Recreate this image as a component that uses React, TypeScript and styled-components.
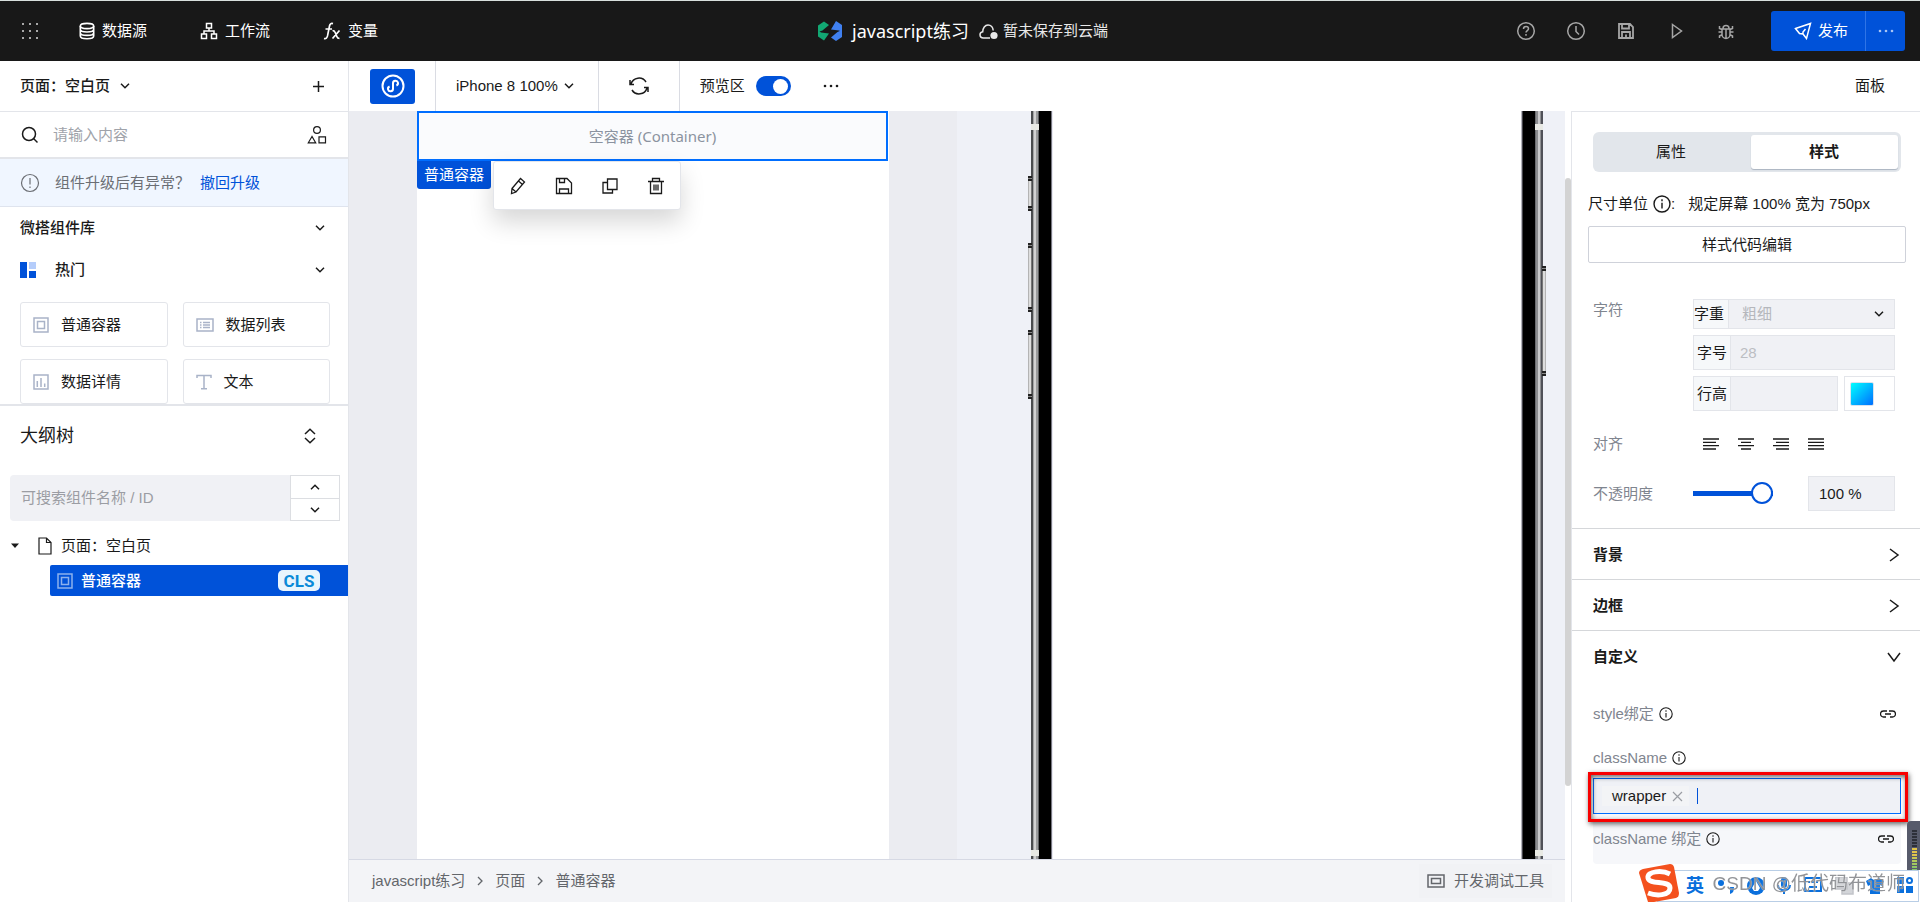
import React from 'react';
import styled, { createGlobalStyle, css } from 'styled-components';

const blue = '#0052d9';
const ink = '#1a1a1a';
const line = '#e3e5ea';
const sans = '"Liberation Sans", "Noto Sans CJK SC", sans-serif';
const humanist = '"Noto Sans", "Noto Sans CJK SC", sans-serif';

const GlobalStyle = createGlobalStyle`
  * { box-sizing: border-box; }
  body { margin: 0; background: #fff; color: ${ink}; font: 15px/22px ${sans}; }
  button, input, select { font: inherit; color: inherit; margin: 0; }
  button { padding: 0; border: 0; background: none; cursor: pointer; }
  a { text-decoration: none; color: inherit; }
  h2, h3, p { margin: 0; font-size: inherit; }
`;

/* ---------- icons ---------- */
const Svg = styled.svg<{ $w: number; $h: number }>`
  display: block;
  flex: none;
  width: ${p => p.$w}px;
  height: ${p => p.$h}px;
  fill: none;
  stroke: currentColor;
`;

type IconProps = { w?: number; h?: number; sw?: number; children: React.ReactNode };
const Icon = ({ w = 18, h = w, sw = 1.5, children }: IconProps) => (
  <Svg $w={w} $h={h} viewBox={`0 0 ${w} ${h}`} strokeWidth={sw} aria-hidden="true">{children}</Svg>
);

const Chevron = ({ up = false }: { up?: boolean }) => (
  <Icon w={10} h={8}><path d={up ? 'M1 6.2 5 2.2 9 6.2' : 'M1 1.8 5 5.8 9 1.8'} /></Icon>
);
const DotGrid = () => (
  <Icon w={18}>
    <g fill="#a8a8a8" stroke="none">
      {[2, 9, 16].flatMap(y => [2, 9, 16].map(x => <rect key={`${x}-${y}`} x={x - 1} y={y - 1} width="2" height="2" />))}
    </g>
  </Icon>
);
const Database = () => (
  <Icon w={16} h={18} sw={1.6}>
    <ellipse cx="8" cy="4" rx="6.7" ry="2.6" />
    <path d="M1.3 4v10c0 1.5 3 2.7 6.7 2.7s6.7-1.2 6.7-2.7V4M1.3 7.3c0 1.5 3 2.7 6.7 2.7s6.7-1.2 6.7-2.7M1.3 10.7c0 1.5 3 2.7 6.7 2.7s6.7-1.2 6.7-2.7" />
  </Icon>
);
const Workflow = () => (
  <Icon w={18}><rect x="6.5" y="1.5" width="5" height="4.5" /><rect x="1.5" y="12" width="5" height="4.5" /><rect x="11.5" y="12" width="5" height="4.5" /><path d="M9 6v3M4 12V9h10v3" /></Icon>
);
const Formula = () => (
  <Icon w={18} sw={1.7}><path d="M1 16.5c2 .6 3-.6 3.500-2.600L6.500 4c.4-2 1.500-3 3.500-2.400M2.500 7H9M9.500 8.500c1.500 0 2 .5 2.700 2l1.600 4c.5 1.400 1 2 2.700 2M16.500 8.500 9.500 16.500" /></Icon>
);
const Cloud = () => (
  <Icon w={19} h={17}><path d="M11 15H4.5C2.5 15 1 13.8 1 11.8c0-1.7 1-2.7 2.700-3C3.800 5 6 2 9 2s5 2.500 5.200 5.500" /><circle cx="15" cy="12.5" r="3.6" fill="currentColor" stroke="none" /></Icon>
);
const Logo = () => (
  <Icon w={24} h={20}>
    <g stroke="none">
      <path fill="#12a873" d="M0 4.500 6 .5l5 3.500-6.500 5.500L0 11z" />
      <path fill="#12a873" d="M0 9l3 2.500 8 1-5 7-6-4z" />
      <path fill="#4080f0" d="M18 0l6 4v7l-3-1.500-8-1z" />
      <path fill="#4080f0" d="M24 9v7l-6 4-5-3.500 6.500-5.500z" />
    </g>
  </Icon>
);
const Help = () => (
  <Icon w={20}><circle cx="10" cy="10" r="8.3" /><path d="M7.500 8c0-1.500 1.100-2.400 2.500-2.400s2.500.9 2.500 2.200c0 1.700-2.500 1.900-2.500 3.700M10 13v1.700" /></Icon>
);
const History = () => <Icon w={20}><circle cx="10" cy="10" r="8.3" /><path d="M10 5v5.500l3 3" /></Icon>;
const SaveOutline = () => (
  <Icon w={18} sw={1.8}><path d="M2 2h11l3 3v11H2zM5 2v4.500h7V2M5 16v-6h8v6M9 12.500v3" /></Icon>
);
const PlayIcon = () => <Icon w={18}><path d="M5.500 2.500 14.500 9l-9 6.500z" /></Icon>;
const BugIcon = () => (
  <Icon w={18}><path d="M5 7h8v5.500a4 4 0 0 1-8 0zM6 6.500a3 3 0 0 1 6 0M9 7v9M1.500 10H5M13 10h3.500M2.500 4v2.500L5 7.500M15.500 4v2.500L13 7.500M2.500 16v-2L5 12.800M15.500 16v-2L13 12.800" /></Icon>
);
const Plane = () => <Icon w={18}><path d="M1.500 6.500 16.500 1.500 12.500 16.500 9 12 5.500 11.500zM9 12v-2l2.500-3" /></Icon>;
const Dots = () => (
  <Icon w={18} h={4}><g fill="currentColor" stroke="none"><circle cx="3" cy="2" r="1.3" /><circle cx="9" cy="2" r="1.3" /><circle cx="15" cy="2" r="1.3" /></g></Icon>
);
const Plus = () => <Icon w={13}><path d="M6.500 1v11M1 6.500h11" /></Icon>;
const SearchIcon = () => <Icon w={18}><circle cx="8" cy="8" r="6.5" /><path d="m12.500 12.500 4 4" /></Icon>;
const Shapes = () => <Icon w={20} h={18} sw={1.2}><circle cx="10" cy="4" r="3.4" /><path d="M5 10.500 1.300 16.800h7.400zM12 10.800h6.500v6H12z" /></Icon>;
const Warn = () => <Icon w={20} sw={1.2}><circle cx="10" cy="10" r="8.5" /><path d="M10 5v6.500M10 13.500V15" /></Icon>;
const Hot = () => (
  <Icon w={16}><g stroke="none"><path fill={blue} d="M0 0h7v16H0zM9 9h7v7H9z" /><path fill="#b5cdfb" d="M9 0h7v7H9z" /></g></Icon>
);
const Box = () => <Icon w={16}><path d="M1 1h14v14H1zM4.500 4.500h7v7h-7z" /></Icon>;
const ListIcon = () => <Icon w={18} h={14}><path d="M1 1h16v12H1zM4 4.500h1.500M7 4.500h7M4 7h1.500M7 7h7M4 9.500h1.500M7 9.500h7" /></Icon>;
const ChartIcon = () => <Icon w={16}><path d="M1 1h14v14H1zM4.300 7v6M8 4v9M11.700 9.500V13" /></Icon>;
const TextIcon = () => <Icon w={16}><path d="M1 4V1.500h14V4M8 1.500v13M5 14.800h6" /></Icon>;
const Sorter = () => <Icon w={12} h={16}><path d="M1 6 6 1.200 11 6M1 10 6 14.800 11 10" /></Icon>;
const Caret = () => <Icon w={10} h={6}><path d="M1 .5h8L5 5z" fill="currentColor" stroke="none" /></Icon>;
const FileIcon = () => <Icon w={14} h={18} sw={1.2}><path d="M1 1h7.500L13 5.500V17H1zM8.500 1v4.500H13" /></Icon>;
const MiniProgram = () => (
  <Icon w={24} sw={2}><circle cx="12" cy="12" r="10.5" /><path d="M12 14.800V9.200a2.500 2.500 0 1 1 3.400 2.300M12 9.200v5.600a2.500 2.500 0 1 1-3.400-2.300" /></Icon>
);
const Refresh = () => <Icon w={20}><path d="M2 8A8.300 8.300 0 0 1 17 6M18 12A8.300 8.300 0 0 1 3 14M1 4v4.500h4M19 16v-4.500h-4" /></Icon>;
const Pencil = () => <Icon w={16} h={18} sw={1.3}><path d="M2 11.500 10.500 1.500 14.500 5 6 15 1.500 16.500zM8.500 4l4 3.500M2 11.500 6 15" /></Icon>;
const SaveDisk = () => <Icon w={18} sw={1.3}><path d="M1.500 1.500h10.500l4.500 4.500v10.500h-15zM4.500 1.500v4h5v-4M4.500 16.500V12h9v4.500" /></Icon>;
const Copy = () => <Icon w={16} sw={1.3}><path d="M5.500 1h9.500v10.500H5.500zM5.500 4.500H1V15h9.500v-3.500" /></Icon>;
const Trash = () => <Icon w={18} sw={1.3}><path d="M1 4.500h16M5.500 4.500v-3h7v3M3.500 4.500v12h11v-12M7 7.500v6M9 7.500v6M11 7.500v6" /></Icon>;
const Info = ({ size = 14 }: { size?: number }) => (
  <Svg $w={size} $h={size} viewBox="0 0 14 14" strokeWidth="1.1" aria-hidden="true"><circle cx="7" cy="7" r="6.2" /><path d="M7 6v4.500M7 3.300v1.500" /></Svg>
);
const Link = () => <Icon w={16} h={8} sw={1.3}><path d="M7 1H3.500a3 3 0 0 0 0 6H6M9 1h3.500a3 3 0 0 1 0 6H10M5 4h6" /></Icon>;
const Monitor = () => <Icon w={18} h={14}><path d="M1 1h16v12H1zM4.500 4.500h9v5h-9z" /></Icon>;
const Crumb = () => <Icon w={6} h={10} sw={1.3}><path d="M1 1l4 4-4 4" /></Icon>;
const AngleRight = () => <Icon w={14}><path d="M3 1l8 6-8 6" /></Icon>;
const AngleDown = () => <Icon w={14}><path d="M1 3l6 8 6-8" /></Icon>;
const Align = ({ from, to }: { from: number; to: number }) => (
  <Icon w={16} h={12} sw={1.3}><path d={`M0 1H16M${from} 4.300H${to}M0 7.700H16M${from} 11H${to}`} /></Icon>
);

/* ---------- shell ---------- */
const Page = styled.div`
  display: flex;
  flex-direction: column;
  height: 100vh;
  overflow: hidden;
`;
const TopBar = styled.header`
  display: flex;
  flex: none;
  align-items: center;
  height: 61px;
  padding: 0 15px 0 21px;
  border-top: 1px solid #d8dfdd;
  background: #181818;
  color: #fff;
`;
const TopSide = styled.div<{ $end?: boolean }>`
  display: flex;
  flex: 1;
  align-items: center;
  justify-content: ${p => (p.$end ? 'flex-end' : 'flex-start')};
`;
const TopNav = styled.nav`
  display: flex;
  gap: 53px;
  margin-left: 40px;
`;
const NavItem = styled.a`
  display: flex;
  align-items: center;
  gap: 7px;
`;
const Title = styled.div`
  display: flex;
  align-items: center;
  gap: 10px;
  font: 18px/24px ${humanist};
`;
const CloudState = styled.span`
  display: flex;
  align-items: center;
  gap: 5px;
  color: #e8e8e8;
  font: 15px/22px ${sans};
`;
const ToolList = styled.div`
  display: flex;
  gap: 30px;
  margin-right: 35px;
  color: #a6a6a6;
`;
const ToolButton = styled.button`
  display: grid;
  place-items: center;
  width: 20px;
  height: 20px;
`;
const PublishGroup = styled.div`
  display: flex;
  height: 40px;
  border-radius: 3px;
  background: ${blue};
  overflow: hidden;
`;
const Publish = styled.button`
  display: flex;
  align-items: center;
  justify-content: center;
  gap: 6px;
  width: 94px;
  padding-left: 6px;
`;
const PublishMore = styled.button`
  display: grid;
  place-items: center;
  width: 40px;
  border-left: 1px solid #2f74e6;
  color: #a9c5f5;
`;
const Body = styled.div`
  display: flex;
  flex: 1;
  min-height: 0;
`;

/* ---------- sidebar ---------- */
const Sidebar = styled.aside`
  flex: none;
  width: 349px;
  border-right: 1px solid ${line};
`;
const SideRow = styled.div<{ $h: number; $lined?: boolean }>`
  display: flex;
  align-items: center;
  justify-content: space-between;
  height: ${p => p.$h}px;
  padding: 0 23px 0 20px;
  ${p => p.$lined && css`border-bottom: 1px solid ${line};`}
`;
const Strong = styled.h3`
  font-weight: 500;
`;
const PageSwitch = styled.button`
  display: flex;
  align-items: center;
  gap: 10px;
  font-weight: 500;
`;
const IconButton = styled.button`
  display: grid;
  place-items: center;
`;
const SearchBox = styled.label`
  display: flex;
  align-items: center;
  height: 47px;
  padding: 0 21px;
  border-bottom: 2px solid ${line};
`;
const PlainInput = styled.input`
  flex: 1;
  min-width: 0;
  margin: 0 0 0 14px;
  padding: 0;
  border: 0;
  outline: 0;
  background: transparent;
  &::placeholder { color: #a0a3aa; opacity: 1; }
`;
const Notice = styled.div`
  display: flex;
  align-items: center;
  height: 48px;
  padding: 0 20px;
  border-bottom: 1px solid #dfe4ee;
  background: #f0f6ff;
  color: #6b6e74;
`;
const NoticeText = styled.p`margin-left: 15px;`;
const NoticeLink = styled.a`
  margin-left: 10px;
  color: ${blue};
`;
const GroupTitle = styled(Strong)`
  margin-left: 19px;
  flex: 1;
`;
const CardGrid = styled.div`
  display: grid;
  grid-template-columns: 1fr 1fr;
  gap: 12px 15px;
  padding: 11px 18px 0 20px;
  border-bottom: 2px solid ${line};
`;
const Card = styled.button`
  display: flex;
  align-items: center;
  gap: 12px;
  height: 45px;
  padding-left: 12px;
  border: 1px solid ${line};
  border-radius: 3px;
  svg { color: #a9b3c8; }
`;
const OutlineHead = styled.div`
  display: flex;
  align-items: center;
  justify-content: space-between;
  height: 60px;
  padding: 0 32px 0 20px;
`;
const OutlineTitle = styled.h2`
  font-size: 18px;
  font-weight: 400;
`;
const OutlineSearch = styled.div`
  display: flex;
  height: 46px;
  margin: 9px 8px 0 10px;
`;
const OutlineInput = styled.input`
  flex: 1;
  min-width: 0;
  padding: 0 11px;
  border: 0;
  border-radius: 4px 0 0 4px;
  background: #f0f1f5;
  &::placeholder { color: #9b9da3; opacity: 1; }
`;
const Stepper = styled.div`
  display: grid;
  grid-template-rows: 1fr 1fr;
  width: 50px;
  border: 1px solid #dcdee2;
  button + button { border-top: 1px solid #dcdee2; }
`;
const TreeRow = styled.div`
  display: flex;
  align-items: center;
  height: 30px;
  margin-top: 10px;
  padding-left: 10px;
`;
const TreeIcon = styled.span`margin: 0 9px 0 18px;`;
const TreeLeaf = styled.button`
  display: flex;
  align-items: center;
  gap: 8px;
  width: calc(100% - 50px);
  height: 31px;
  margin: 4px 0 0 50px;
  padding: 0 28px 0 7px;
  border-radius: 2px 0 0 2px;
  background: ${blue};
  color: #fff;
  font-weight: 500;
  svg { opacity: 0.55; }
`;
const Cls = styled.span`
  margin-left: auto;
  width: 42px;
  height: 21px;
  border-radius: 5px;
  background: #e9f5fd;
  color: #0a8ad8;
  font: 700 17px/22px Roboto, sans-serif;
  text-align: center;
`;

/* ---------- work area ---------- */
const Work = styled.div`
  display: flex;
  flex: 1;
  flex-direction: column;
  min-width: 0;
`;
const Toolbar = styled.div`
  display: flex;
  flex: none;
  height: 50px;
`;
const ToolCell = styled.div<{ $pad: string }>`
  display: flex;
  align-items: center;
  padding: ${p => p.$pad};
  border-right: 1px solid #dadce3;
  &:nth-last-child(-n + 2) { border-right: 0; }
`;
const Mode = styled.button`
  display: grid;
  place-items: center;
  width: 45px;
  height: 35px;
  border-radius: 3px;
  background: ${blue};
  color: #fff;
`;
const Device = styled.button`
  display: flex;
  align-items: center;
  gap: 6px;
`;
const SwitchLabel = styled.label`
  display: flex;
  align-items: center;
  gap: 11px;
  margin-right: 31px;
`;
const Switch = styled.input`
  appearance: none;
  display: flex;
  align-items: center;
  justify-content: flex-end;
  width: 35px;
  height: 20px;
  padding: 0 3px;
  border-radius: 10px;
  background: ${blue};
  &::before {
    content: '';
    width: 15px;
    height: 15px;
    border-radius: 50%;
    background: #fff;
  }
`;
const PanelToggle = styled.button`
  margin-left: auto;
  padding: 0 35px;
`;
const Split = styled.div`
  display: flex;
  flex: 1;
  min-height: 0;
`;
const Stage = styled.main`
  display: flex;
  flex: 1;
  flex-direction: column;
  min-width: 0;
`;
const StageRow = styled.div`
  display: grid;
  grid-template-columns: 1fr 1fr;
  flex: 1;
  min-height: 0;
`;
const Design = styled.section`
  display: flex;
  justify-content: center;
  background: #ebecf1;
`;
const Sheet = styled.div`
  width: 472px;
  background: #fff;
`;
const Selected = styled.div`
  position: relative;
  display: grid;
  place-items: center;
  height: 50px;
  margin-right: 1px;
  border: 2px solid #006eff;
  background: #fafbfd;
  color: #8b93a0;
  font-family: ${humanist};
`;
const FloatRow = styled.div`
  position: absolute;
  top: 48px;
  left: -2px;
  display: flex;
  align-items: flex-start;
  gap: 2px;
`;
const NameTag = styled.span`
  height: 28px;
  padding: 0 7px;
  border-radius: 0 0 3px 3px;
  background: ${blue};
  color: #fff;
  font: 15px/27px ${sans};
`;
const Actions = styled.div`
  display: flex;
  justify-content: space-between;
  width: 188px;
  height: 49px;
  padding: 0 14px;
  border: 1px solid ${line};
  border-radius: 3px;
  background: #fff;
  box-shadow: 0 12px 24px rgba(0, 0, 0, 0.16);
  color: ${ink};
`;
const ActionButton = styled(IconButton)`width: 20px;`;
const Preview = styled.section`
  display: flex;
  justify-content: flex-end;
  padding-right: 22px;
  background: #eff1f7;
`;
const Phone = styled.div`
  display: flex;
  width: 512px;
  background: #fff;
`;
const bezel = css`
  position: relative;
  width: 22px;
`;
const bands = 'linear-gradient(#e8e9e4, #e8e9e4)';
const BezelLeft = styled.div`
  ${bezel}
  background:
    ${bands} 0 13px / 8px 6px no-repeat,
    ${bands} 0 calc(100% - 3px) / 8px 6px no-repeat,
    linear-gradient(90deg, #4a4c4e 0 2px, #a3a4a5 2px 3px, #d2d2d2 3px 5px, #9a9b9c 5px 7px, #5c5e60 7px 8px, #000 8px 20px, #77777f 20px 21px, #e8e8f2 21px);
`;
const BezelRight = styled.div`
  ${bezel}
  margin-left: auto;
  background:
    ${bands} 14px 13px / 8px 6px no-repeat,
    ${bands} 14px calc(100% - 3px) / 8px 6px no-repeat,
    linear-gradient(90deg, #b5b5bd 0 1px, #44444a 1px 2px, #000 2px 14px, #6c6d70 14px 15px, #8b8c8f 15px 17px, #c9c9cb 17px 19px, #8f9093 19px 20px, #505158 20px 22px);
`;
const SideKey = styled.span<{ $top: number; $h: number; $right?: boolean }>`
  position: absolute;
  top: ${p => p.$top}px;
  ${p => (p.$right ? 'right: -3px;' : 'left: -3px;')}
  width: 4px;
  height: ${p => p.$h}px;
  background:
    linear-gradient(#222 0 2px, #888 2px 3px, #222 3px 5px, transparent 5px calc(100% - 5px), #222 calc(100% - 5px) calc(100% - 3px), #888 calc(100% - 3px) calc(100% - 2px), #222 calc(100% - 2px)),
    linear-gradient(${p => (p.$right ? '270deg' : '90deg')}, #b4b4b4 0 1px, #dedede 1px 3px, #777 3px);
`;
const ScrollTrack = styled.div`
  flex: none;
  width: 6px;
  padding-top: 67px;
  background: #fff;
`;
const ScrollThumb = styled.div`
  height: 84%;
  border-radius: 3px;
  background: #d3d3d3;
`;
const Footer = styled.footer`
  display: flex;
  flex: none;
  align-items: center;
  justify-content: space-between;
  height: 43px;
  padding: 0 13px 0 23px;
  border-top: 1px solid #d6d9e4;
  background: #f3f4f7;
  color: #63666b;
`;
const Crumbs = styled.nav`
  display: flex;
  align-items: center;
  gap: 12px;
`;
const DevTools = styled.button`
  display: flex;
  align-items: center;
  gap: 9px;
  height: 34px;
  padding: 0 8px;
  background: #f1f2f5;
`;

/* ---------- property panel ---------- */
const Panel = styled.aside`
  flex: none;
  width: 349px;
  padding: 20px 0 0;
  border: 1px solid ${line};
  border-width: 1px 0 0 1px;
  overflow: hidden;
`;
const Tabs = styled.div`
  display: grid;
  grid-template-columns: 155px 1fr;
  height: 40px;
  margin: 0 19px 0 21px;
  padding: 3px;
  border-radius: 6px;
  background: #e2e6eb;
`;
const Tab = styled.button<{ $active?: boolean }>`
  padding-right: 5px;
  border-radius: 3px;
  ${p => p.$active && css`
    padding-right: 1px;
    background: #fff;
    font-weight: 700;
    box-shadow: 0 1px 1px #aab3c0;
  `}
`;
const UnitLine = styled.p`
  display: flex;
  align-items: center;
  height: 22px;
  margin: 21px 16px 0;
  white-space: pre;
  svg { margin-left: 5px; }
`;
const UnitValue = styled.span`margin-left: 13px;`;
const CodeButton = styled.button`
  display: block;
  width: calc(100% - 30px);
  height: 37px;
  margin: 11px 14px 0 16px;
  border: 1px solid #cfd2da;
  border-radius: 2px;
`;
const Field = styled.div<{ $top: number }>`
  display: flex;
  align-items: flex-start;
  margin: ${p => p.$top}px 25px 0 21px;
`;
const FieldName = styled.span<{ $lh?: number }>`
  flex: none;
  width: 100px;
  color: #7f858f;
  line-height: ${p => p.$lh ?? 22}px;
`;
const Stack = styled.div`
  display: grid;
  flex: 1;
  gap: 6px;
`;
const Addon = styled.label<{ $h: number }>`
  position: relative;
  display: flex;
  flex: 1;
  align-items: center;
  height: ${p => p.$h}px;
  border: 1px solid ${line};
  background: #f0f1f5;
`;
const AddonName = styled.span<{ $tight?: boolean }>`
  display: flex;
  flex: none;
  align-items: center;
  width: ${p => (p.$tight ? 35 : 37)}px;
  height: 100%;
  padding-left: ${p => (p.$tight ? 0 : 3)}px;
  border-right: 1px solid ${line};
  background: #f6f8fa;
`;
const AddonInput = styled.input`
  flex: 1;
  width: 100%;
  min-width: 0;
  padding: 0 9px;
  border: 0;
  background: transparent;
  &::placeholder { color: #bcbec3; opacity: 1; }
`;
const AddonSelect = styled.select`
  flex: 1;
  appearance: none;
  padding: 0 13px;
  border: 0;
  background: transparent;
  color: #b5b7bc;
`;
const SelectArrow = styled.span`
  position: absolute;
  right: 10px;
  pointer-events: none;
`;
const Line = styled.div`
  display: flex;
  gap: 6px;
`;
const ColorBox = styled.button`
  width: 51px;
  height: 35px;
  padding-left: 5px;
  border: 1px solid ${line};
`;
const Swatch = styled.span`
  display: block;
  width: 24px;
  height: 24px;
  border: 1px solid #d9e2ee;
  border-radius: 2px;
  background: linear-gradient(135deg, #00ffff, #006eff);
`;
const AlignList = styled.div`
  display: flex;
  align-items: center;
  gap: 19px;
  height: 22px;
  margin-left: 10px;
`;
const Range = styled.input`
  appearance: none;
  width: 80px;
  height: 35px;
  background: transparent;
  &::-webkit-slider-runnable-track { height: 5px; background: ${blue}; }
  &::-webkit-slider-thumb {
    appearance: none;
    width: 22px;
    height: 22px;
    margin-top: -9px;
    border: 2px solid ${blue};
    border-radius: 50%;
    background: #fff;
  }
`;
const NumberBox = styled.input`
  width: 87px;
  height: 35px;
  margin-left: auto;
  padding: 0 10px;
  border: 1px solid ${line};
  background: #f0f1f5;
`;
const Fold = styled.button`
  display: flex;
  align-items: center;
  justify-content: space-between;
  width: 100%;
  height: 51px;
  padding: 2px 19px 0 21px;
  border-top: 1px solid #d5d7da;
  font-weight: 700;
`;
const BindRow = styled.div<{ $top: number; $filled?: boolean }>`
  display: flex;
  align-items: center;
  gap: 5px;
  height: 22px;
  margin: ${p => p.$top}px 19px 0 21px;
  padding-right: 5px;
  color: #7f858f;
  svg { color: ${ink}; }
  ${p => p.$filled && css`
    height: 50px;
    padding-right: 7px;
    border-radius: 4px;
    background: #f6f7fa;
  `}
`;
const BindButton = styled(IconButton)`margin-left: auto;`;
const TagField = styled.div`
  position: relative;
  display: flex;
  align-items: center;
  height: 36px;
  margin: 9px 19px 0 21px;
  padding: 0 8px;
  border: 1px solid #006eff;
  background: #eff1f6;
`;
const Mark = styled.span`
  position: absolute;
  inset: -7px -8px -9px -6px;
  border: 3px solid #f80000;
  box-shadow: 1px 2px 5px rgba(0, 0, 0, 0.6), inset 1px 2px 5px rgba(0, 0, 0, 0.6);
  pointer-events: none;
`;
const Tag = styled.span`
  display: flex;
  align-items: center;
  gap: 6px;
  height: 20px;
  padding: 0 6px 0 10px;
  background: #f3f4f6;
  line-height: 20px;
  svg { color: #9a9da3; }
`;
const TagCaret = styled.span`
  width: 1px;
  height: 16px;
  margin-left: 8px;
  background: ${blue};
`;

/* ---------- desktop overlays ---------- */
const Meter = styled.div`
  position: fixed;
  right: 0;
  bottom: 32px;
  width: 13px;
  height: 49px;
  padding: 9px 3px 0 5px;
  border-radius: 4px 0 0 0;
  background: #575b6b;
  &::before {
    content: '';
    display: block;
    height: 40px;
    background:
      repeating-linear-gradient(transparent 0 2px, #575b6b 2px 3px),
      linear-gradient(#2d3039 0 17px, #e3c54a 17px 25px, #b8cc58 30px, #7fc46c);
  }
`;
const Ime = styled.div`
  position: fixed;
  right: 1px;
  bottom: 0;
  display: flex;
  align-items: center;
  width: 262px;
  height: 32px;
  padding: 0 5px 0 28px;
  border: 1px solid #b9cee6;
  background: #fff;
  color: #0a6fdc;
`;
const ImeLogo = styled.span`
  position: absolute;
  left: -19px;
  bottom: -1px;
`;
const ImeMode = styled.span`
  font-weight: 700;
  font-size: 18px;
`;
const ImeIcons = styled.span`
  display: flex;
  flex: 1;
  justify-content: space-between;
  margin-left: 14px;
`;
const Watermark = styled.span`
  position: fixed;
  right: 15px;
  bottom: 7px;
  color: rgba(110, 112, 118, 0.75);
  font-size: 19px;
  text-shadow: 0 0 1px #fff;
  white-space: nowrap;
`;

const nav = [
  { name: '数据源', icon: <Database /> },
  { name: '工作流', icon: <Workflow /> },
  { name: '变量', icon: <Formula /> },
];
const tools = [
  { name: '帮助', icon: <Help /> },
  { name: '历史', icon: <History /> },
  { name: '保存', icon: <SaveOutline /> },
  { name: '预览', icon: <PlayIcon /> },
  { name: '调试', icon: <BugIcon /> },
];
const cards = [
  { name: '普通容器', icon: <Box /> },
  { name: '数据列表', icon: <ListIcon /> },
  { name: '数据详情', icon: <ChartIcon /> },
  { name: '文本', icon: <TextIcon /> },
];
const actions = [
  { name: '编辑', icon: <Pencil /> },
  { name: '保存', icon: <SaveDisk /> },
  { name: '复制', icon: <Copy /> },
  { name: '删除', icon: <Trash /> },
];
const aligns = [
  { name: '左对齐', from: 0, to: 13 },
  { name: '居中', from: 3, to: 13 },
  { name: '右对齐', from: 3, to: 16 },
  { name: '两端对齐', from: 0, to: 16 },
];

const Header = () => (
  <TopBar>
    <TopSide>
      <IconButton aria-label="菜单"><DotGrid /></IconButton>
      <TopNav>{nav.map(n => <NavItem href="#" key={n.name}>{n.icon}{n.name}</NavItem>)}</TopNav>
    </TopSide>
    <Title>
      <Logo />javascript练习
      <CloudState><Cloud />暂未保存到云端</CloudState>
    </Title>
    <TopSide $end>
      <ToolList>{tools.map(t => <ToolButton key={t.name} aria-label={t.name}>{t.icon}</ToolButton>)}</ToolList>
      <PublishGroup>
        <Publish><Plane />发布</Publish>
        <PublishMore aria-label="更多"><Dots /></PublishMore>
      </PublishGroup>
    </TopSide>
  </TopBar>
);

const LeftSide = () => (
  <Sidebar>
    <SideRow $h={51} $lined>
      <PageSwitch>页面：空白页<Chevron /></PageSwitch>
      <IconButton aria-label="新建页面"><Plus /></IconButton>
    </SideRow>
    <SearchBox>
      <SearchIcon />
      <PlainInput placeholder="请输入内容" />
      <Shapes />
    </SearchBox>
    <Notice>
      <Warn />
      <NoticeText>组件升级后有异常？</NoticeText>
      <NoticeLink href="#">撤回升级</NoticeLink>
    </Notice>
    <SideRow $h={42}><Strong>微搭组件库</Strong><Chevron /></SideRow>
    <SideRow $h={42}><Hot /><GroupTitle>热门</GroupTitle><Chevron /></SideRow>
    <CardGrid>{cards.map(c => <Card key={c.name}>{c.icon}{c.name}</Card>)}</CardGrid>
    <OutlineHead>
      <OutlineTitle>大纲树</OutlineTitle>
      <IconButton aria-label="展开收起"><Sorter /></IconButton>
    </OutlineHead>
    <OutlineSearch>
      <OutlineInput aria-label="搜索组件" placeholder="可搜索组件名称 / ID" />
      <Stepper>
        <IconButton aria-label="上一个"><Chevron up /></IconButton>
        <IconButton aria-label="下一个"><Chevron /></IconButton>
      </Stepper>
    </OutlineSearch>
    <TreeRow><Caret /><TreeIcon><FileIcon /></TreeIcon>页面：空白页</TreeRow>
    <TreeLeaf><Box />普通容器<Cls>CLS</Cls></TreeLeaf>
  </Sidebar>
);

const StageArea = () => (
  <Stage>
    <StageRow>
      <Design>
        <Sheet>
          <Selected>
            空容器 (Container)
            <FloatRow>
              <NameTag>普通容器</NameTag>
              <Actions>{actions.map(a => <ActionButton key={a.name} aria-label={a.name}>{a.icon}</ActionButton>)}</Actions>
            </FloatRow>
          </Selected>
        </Sheet>
      </Design>
      <Preview>
        <Phone>
          <BezelLeft>
            <SideKey $top={65} $h={35} />
            <SideKey $top={132} $h={69} />
            <SideKey $top={219} $h={69} />
          </BezelLeft>
          <BezelRight><SideKey $top={155} $h={110} $right /></BezelRight>
        </Phone>
      </Preview>
    </StageRow>
    <Footer>
      <Crumbs>
        <a href="#">javascript练习</a><Crumb /><a href="#">页面</a><Crumb /><a href="#">普通容器</a>
      </Crumbs>
      <DevTools><Monitor />开发调试工具</DevTools>
    </Footer>
  </Stage>
);

const StylePanel = () => (
  <Panel>
    <Tabs><Tab>属性</Tab><Tab $active>样式</Tab></Tabs>
    <UnitLine>尺寸单位<Info size={18} />:<UnitValue>规定屏幕 100% 宽为 750px</UnitValue></UnitLine>
    <CodeButton>样式代码编辑</CodeButton>
    <Field $top={36}>
      <FieldName>字符</FieldName>
      <Stack>
        <Addon $h={30}>
          <AddonName $tight>字重</AddonName>
          <AddonSelect defaultValue="粗细"><option>粗细</option></AddonSelect>
          <SelectArrow><Chevron /></SelectArrow>
        </Addon>
        <Addon $h={35}><AddonName>字号</AddonName><AddonInput placeholder="28" /></Addon>
        <Line>
          <Addon $h={35}><AddonName>行高</AddonName><AddonInput /></Addon>
          <ColorBox aria-label="文字颜色"><Swatch /></ColorBox>
        </Line>
      </Stack>
    </Field>
    <Field $top={22}>
      <FieldName>对齐</FieldName>
      <AlignList>{aligns.map(a => <IconButton key={a.name} aria-label={a.name}><Align from={a.from} to={a.to} /></IconButton>)}</AlignList>
    </Field>
    <Field $top={21}>
      <FieldName $lh={35}>不透明度</FieldName>
      <Range type="range" defaultValue={100} aria-label="不透明度" />
      <NumberBox defaultValue="100 %" aria-label="不透明度数值" />
    </Field>
    <Field $top={17} />
    <Fold>背景<AngleRight /></Fold>
    <Fold>边框<AngleRight /></Fold>
    <Fold>自定义<AngleDown /></Fold>
    <BindRow $top={22}>style绑定<Info /><BindButton aria-label="绑定 style"><Link /></BindButton></BindRow>
    <BindRow $top={22}>className<Info /></BindRow>
    <TagField>
      <Tag>wrapper<IconButton aria-label="移除 wrapper"><Icon w={11} sw={1.2}><path d="M1 1l9 9M10 1l-9 9" /></Icon></IconButton></Tag>
      <TagCaret />
      <AddonInput aria-label="className" />
      <Mark />
    </TagField>
    <BindRow $top={0} $filled>className 绑定<Info /><BindButton aria-label="绑定 className"><Link /></BindButton></BindRow>
  </Panel>
);

const InputBar = () => (
  <>
    <Meter />
    <Ime>
      <ImeLogo>
        <Icon w={40} h={38}>
          <path d="M4 5 31 0q3 0 4 3l5 26q0 4-3 5l-22 4H9L0 9q0-3 4-4z" fill="#f4511e" stroke="none" />
          <path d="M31 10C23 6 8 7 9 14c1 7 22 2 22 10 0 8-14 8-22 5" stroke="#fff" strokeWidth="5" />
        </Icon>
      </ImeLogo>
      <ImeMode>英</ImeMode>
      <ImeIcons>
        <Icon w={16} h={18}><g fill="currentColor" stroke="none"><circle cx="3" cy="6" r="3" /><path d="M12 10h4c0 4-1 6-4 7z" /></g></Icon>
        <Icon w={18}><circle cx="9" cy="9" r="9" fill="currentColor" stroke="none" /><path d="M9 4l4 7-2 3H7l-2-3z" fill="#fff" stroke="none" /></Icon>
        <Icon w={14} h={18} sw={2}><rect x="4" y="0" width="6" height="11" rx="3" fill="currentColor" stroke="none" /><path d="M1 8c0 7 12 7 12 0M7 13v4" /></Icon>
        <Icon w={18} h={16} sw={2}><path d="M1 1h16v13H1zM4 5h2M8 5h2M12 5h2M5 10h8" /></Icon>
        <Icon w={19} h={18}><path d="M0 0h12v12H0zM13 6h5v11H7v-4" fill="#d3d5d9" stroke="#c2c4c9" /></Icon>
        <Icon w={18}><path d="M5 1q4 4 8 0l5 3-2 5-2-1v9H4V8L2 9 0 4z" fill="currentColor" stroke="none" /></Icon>
        <Icon w={16} h={16} sw={2}><path d="M0 0h7v7H0zM0 9h7v7H0zM9 9h7v7H9z" fill="currentColor" stroke="none" /><circle cx="12.5" cy="3.5" r="2.5" /></Icon>
      </ImeIcons>
    </Ime>
    <Watermark>CSDN @低代码布道师</Watermark>
  </>
);

export default function App() {
  return (
    <Page>
      <GlobalStyle />
      <Header />
      <Body>
        <LeftSide />
        <Work>
          <Toolbar>
            <ToolCell $pad="0 20px 0 21px"><Mode aria-label="小程序"><MiniProgram /></Mode></ToolCell>
            <ToolCell $pad="0 24px 0 20px"><Device>iPhone 8 100%<Chevron /></Device></ToolCell>
            <ToolCell $pad="0 30px"><IconButton aria-label="刷新"><Refresh /></IconButton></ToolCell>
            <ToolCell $pad="0 20px">
              <SwitchLabel>预览区<Switch type="checkbox" defaultChecked /></SwitchLabel>
              <IconButton aria-label="更多"><Dots /></IconButton>
            </ToolCell>
            <PanelToggle>面板</PanelToggle>
          </Toolbar>
          <Split>
            <StageArea />
            <ScrollTrack><ScrollThumb /></ScrollTrack>
            <StylePanel />
          </Split>
        </Work>
      </Body>
      <InputBar />
    </Page>
  );
}
